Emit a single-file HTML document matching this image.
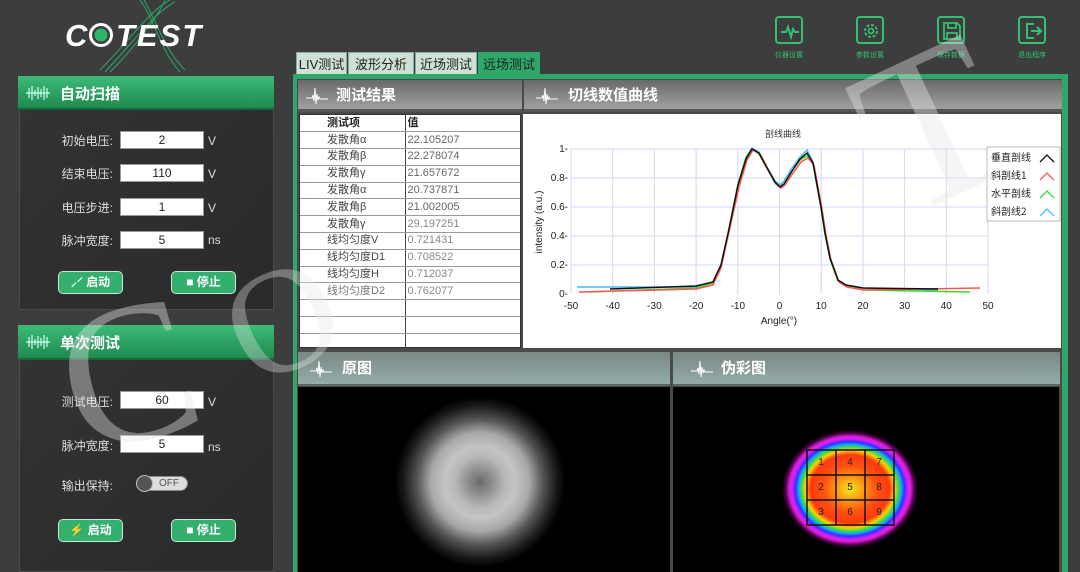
<!DOCTYPE html>
<html><head><meta charset="utf-8">
<style>
*{margin:0;padding:0;box-sizing:border-box}
body{width:1080px;height:572px;overflow:hidden;background:#3d3d3d;font-family:"Liberation Sans","Noto Sans CJK SC",sans-serif;position:relative;color:#fff}
.a{position:absolute}
.ghead{background:linear-gradient(#3dbb78,#1f8a50);border-bottom:2px solid #17653b}
.gbody{background:linear-gradient(135deg,#333,#2a2a2a);border:1px solid #4a4a4a}
.lbl{position:absolute;font-size:12px;color:#ddd;text-align:right;width:80px}
.inp{position:absolute;background:#fff;color:#222;border:1px solid #999;font-size:12px;text-align:center;line-height:16px;width:84px;height:18px}
.unit{position:absolute;font-size:12px;color:#ddd}
.btn{position:absolute;width:65px;height:23px;background:#33b06e;border:1.5px solid #c8e8d4;border-radius:5px;font-size:12px;font-weight:bold;color:#fff;text-align:center;line-height:20px}
.tab{position:absolute;top:52px;height:23px;background:#cfe0d4;color:#222;font-size:13px;line-height:23px;text-align:center;border:1px solid #8aa}
.phead{position:absolute;height:32px;background:linear-gradient(#6a6a6a,#a0a0a0);border-bottom:3px solid #555;font-size:15px;font-weight:bold;color:#fff;line-height:32px}
.phead2{position:absolute;height:34px;background:linear-gradient(#7a8885,#94aca8);border-bottom:2px solid #5a6664;font-size:15px;font-weight:bold;color:#fff;line-height:34px}
table{border-collapse:collapse;font-size:11px}
td{height:16.8px;border-bottom:1px solid #9a9a9a;padding:0;line-height:15px}
.ic{position:absolute;width:28px;height:28px;border:2px solid #34c072;border-radius:4px}
.icl{position:absolute;font-size:7px;color:#34c072;width:50px;text-align:center}
.wm{position:absolute;font-family:"Liberation Serif",serif;color:rgba(230,230,230,0.4);line-height:1}
</style></head><body>

<!-- logo -->
<svg class="a" style="left:60px;top:0" width="170" height="75">
<g fill="none" stroke="#2aa866" stroke-width="1">
<path d="M40 70 C70 40 90 10 110 0"/><path d="M45 72 C75 40 95 12 115 2"/><path d="M50 72 C80 42 100 12 105 0"/>
<path d="M80 0 C95 20 100 50 120 72"/><path d="M84 0 C98 25 105 50 125 70"/>
</g>
<text x="5" y="46" font-family="Liberation Sans" font-weight="bold" font-style="italic" font-size="31" fill="#fff">C</text>
<circle cx="41" cy="35" r="10.5" fill="none" stroke="#fff" stroke-width="3"/><circle cx="41" cy="35" r="6.5" fill="#2fb56a"/>
<text x="56" y="46" font-family="Liberation Sans" font-weight="bold" font-style="italic" font-size="31" fill="#fff" letter-spacing="2">TEST</text>
</svg>

<!-- top icons -->
<div class="ic" style="left:775px;top:16px"></div>
<svg class="a" style="left:779px;top:20px" width="22" height="22"><path d="M2 12 H7 L9 7 L12 17 L14 9 L16 12 H20" fill="none" stroke="#34c072" stroke-width="2"/></svg>
<div class="ic" style="left:856px;top:16px"></div>
<svg class="a" style="left:860px;top:20px" width="22" height="22"><circle cx="11" cy="11" r="6" fill="none" stroke="#34c072" stroke-width="2" stroke-dasharray="3 1.7"/><circle cx="11" cy="11" r="2.5" fill="none" stroke="#34c072" stroke-width="1.8"/></svg>
<div class="ic" style="left:937px;top:16px"></div>
<svg class="a" style="left:941px;top:20px" width="22" height="22"><path d="M3 3 H16 L19 6 V19 H3 Z M7 3 V8 H15 V3 M6 19 V13 H16 V19" fill="none" stroke="#34c072" stroke-width="1.8"/></svg>
<div class="ic" style="left:1018px;top:16px"></div>
<svg class="a" style="left:1022px;top:20px" width="22" height="22"><path d="M12 4 H5 V18 H12 M9 11 H19 M15 7 L19 11 L15 15" fill="none" stroke="#34c072" stroke-width="2"/></svg>
<div class="icl" style="left:764px;top:50px">仪器设置</div>
<div class="icl" style="left:845px;top:50px">参数设置</div>
<div class="icl" style="left:926px;top:50px">保存数据</div>
<div class="icl" style="left:1007px;top:50px">退出程序</div>

<!-- left panel 1 -->
<div class="a gbody" style="left:19px;top:108px;width:255px;height:202px"></div>
<div class="a ghead" style="left:18px;top:76px;width:256px;height:34px"></div>
<svg class="a" style="left:25px;top:85px" width="26" height="16"><path d="M1 8H25 M4 3V13 M7 1V15 M10 5V11 M13 2V14 M16 4V12 M19 1V15 M22 3V13" stroke="#cfe" stroke-width="1.2" fill="none"/></svg>
<div class="a" style="left:60px;top:83px;font-size:15px;font-weight:bold">自动扫描</div>
<div class="lbl" style="left:33px;top:132px">初始电压:</div><div class="inp" style="left:120px;top:131px">2</div><div class="unit" style="left:208px;top:134px">V</div>
<div class="lbl" style="left:33px;top:165px">结束电压:</div><div class="inp" style="left:120px;top:164px">110</div><div class="unit" style="left:208px;top:167px">V</div>
<div class="lbl" style="left:33px;top:199px">电压步进:</div><div class="inp" style="left:120px;top:198px">1</div><div class="unit" style="left:208px;top:201px">V</div>
<div class="lbl" style="left:33px;top:232px">脉冲宽度:</div><div class="inp" style="left:120px;top:231px">5</div><div class="unit" style="left:208px;top:233px">ns</div>
<div class="btn" style="left:58px;top:271px">⸝⸍ 启动</div>
<div class="btn" style="left:171px;top:271px">■ 停止</div>

<!-- left panel 2 -->
<div class="a gbody" style="left:19px;top:358px;width:255px;height:214px"></div>
<div class="a ghead" style="left:18px;top:325px;width:256px;height:35px"></div>
<svg class="a" style="left:25px;top:334px" width="26" height="16"><path d="M1 8H25 M4 3V13 M7 1V15 M10 5V11 M13 2V14 M16 4V12 M19 1V15 M22 3V13" stroke="#cfe" stroke-width="1.2" fill="none"/></svg>
<div class="a" style="left:60px;top:332px;font-size:15px;font-weight:bold">单次测试</div>
<div class="lbl" style="left:33px;top:393px">测试电压:</div><div class="inp" style="left:120px;top:391px">60</div><div class="unit" style="left:208px;top:395px">V</div>
<div class="lbl" style="left:33px;top:437px">脉冲宽度:</div><div class="inp" style="left:120px;top:435px">5</div><div class="unit" style="left:208px;top:440px">ns</div>
<div class="lbl" style="left:33px;top:477px">输出保持:</div>
<div class="a" style="left:136px;top:476px;width:52px;height:15px;border-radius:8px;background:#ddd;border:1px solid #888;font-size:10px;color:#555;line-height:13px;padding-left:22px">OFF</div>
<div class="a" style="left:136px;top:475px;width:17px;height:17px;border-radius:50%;background:#555;border:1.5px solid #bbb"></div>
<div class="btn" style="left:58px;top:519px">⚡ 启动</div>
<div class="btn" style="left:171px;top:519px">■ 停止</div>

<!-- tabs -->
<div class="tab" style="left:296px;width:51px">LIV测试</div>
<div class="tab" style="left:348px;width:66px">波形分析</div>
<div class="tab" style="left:415px;width:62px">近场测试</div>
<div class="tab" style="left:478px;width:62px;background:#2ea86a;border-color:#2ea86a">远场测试</div>

<!-- main frame -->
<div class="a" style="left:293px;top:74px;width:775px;height:498px;background:#2ea86a"></div>
<div class="a" style="left:297px;top:79px;width:765px;height:493px;background:#4a4a4a"></div>

<div class="phead" style="left:298px;top:80px;width:224px"><svg class="a" style="left:8px;top:6px" width="22" height="20"><path d="M0 12H6L7 9L8 15L9 2L10 18L11 8L12 14L13 11L14 13H22" stroke="#fff" fill="none" stroke-width="1"/></svg><span style="position:absolute;left:38px">测试结果</span></div>
<div class="phead" style="left:524px;top:80px;width:538px"><svg class="a" style="left:12px;top:6px" width="22" height="20"><path d="M0 12H6L7 9L8 15L9 2L10 18L11 8L12 14L13 11L14 13H22" stroke="#fff" fill="none" stroke-width="1"/></svg><span style="position:absolute;left:44px">切线数值曲线</span></div>

<!-- table -->
<div class="a" style="left:299px;top:114px;width:222px;height:234px;background:#fff;border:1px solid #333">
<table style="width:220px;color:#444">
<tr><td style="width:105px;padding-left:27px;font-weight:bold;color:#222">测试项</td><td style="border-left:1px solid #444;padding-left:2px;color:#222;font-weight:bold">值</td></tr>
<tr><td style="padding-left:27px">发散角α</td><td style="border-left:1px solid #444;padding-left:2px;color:#666">22.105207</td></tr>
<tr><td style="padding-left:27px">发散角β</td><td style="border-left:1px solid #444;padding-left:2px;color:#666">22.278074</td></tr>
<tr><td style="padding-left:27px">发散角γ</td><td style="border-left:1px solid #444;padding-left:2px;color:#666">21.657672</td></tr>
<tr><td style="padding-left:27px">发散角α</td><td style="border-left:1px solid #444;padding-left:2px;color:#666">20.737871</td></tr>
<tr><td style="padding-left:27px">发散角β</td><td style="border-left:1px solid #444;padding-left:2px;color:#666">21.002005</td></tr>
<tr><td style="padding-left:27px">发散角γ</td><td style="border-left:1px solid #444;padding-left:2px;color:#888">29.197251</td></tr>
<tr><td style="padding-left:27px">线均匀度V</td><td style="border-left:1px solid #444;padding-left:2px;color:#888">0.721431</td></tr>
<tr><td style="padding-left:27px">线均匀度D1</td><td style="border-left:1px solid #444;padding-left:2px;color:#888">0.708522</td></tr>
<tr><td style="padding-left:27px">线均匀度H</td><td style="border-left:1px solid #444;padding-left:2px;color:#888">0.712037</td></tr>
<tr><td style="padding-left:27px;color:#777">线均匀度D2</td><td style="border-left:1px solid #444;padding-left:2px;color:#888">0.762077</td></tr>
<tr><td></td><td style="border-left:1px solid #444"></td></tr>
<tr><td></td><td style="border-left:1px solid #444"></td></tr>
<tr><td style="border:0"></td><td style="border-left:1px solid #444;border-bottom:0"></td></tr>
</table></div>

<!-- chart -->
<svg class="a" style="left:523px;top:114px" width="538" height="234" viewBox="523 114 538 234">
<rect x="523" y="114" width="538" height="234" fill="#fff"/>
<g stroke="#d6d6f2" stroke-width="1">
<path d="M571 149V294M612.7 149V294M654.4 149V294M696.1 149V294M737.8 149V294M779.5 149V294M821.2 149V294M862.9 149V294M904.6 149V294M946.3 149V294M988 149V294"/>
<path d="M571 149H988M571 178H988M571 207H988M571 236H988M571 265H988"/>
</g>
<text x="783" y="137" font-size="9" fill="#333" text-anchor="middle" font-family="Noto Sans CJK SC">剖线曲线</text>
<g font-size="10" fill="#222" text-anchor="end" font-family="Liberation Sans">
<text x="568" y="152">1-</text><text x="568" y="181">0.8-</text><text x="568" y="210">0.6-</text><text x="568" y="239">0.4-</text><text x="568" y="268">0.2-</text><text x="568" y="297">0-</text></g>
<g font-size="10" fill="#222" text-anchor="middle" font-family="Liberation Sans">
<text x="571" y="309">-50</text><text x="612.7" y="309">-40</text><text x="654.4" y="309">-30</text><text x="696.1" y="309">-20</text><text x="737.8" y="309">-10</text><text x="779.5" y="309">0</text><text x="821.2" y="309">10</text><text x="862.9" y="309">20</text><text x="904.6" y="309">30</text><text x="946.3" y="309">40</text><text x="988" y="309">50</text>
<text x="779" y="324">Angle(°)</text></g>
<text transform="translate(542,222) rotate(-90)" font-size="10" fill="#222" text-anchor="middle" font-family="Liberation Sans">intensity (a.u.)</text>
<g fill="none" stroke-width="1.5">
<polyline stroke="#4cb8f0" points="577,287 696,287 713,282 721,265 729,229 738,185 746,158 752,148 759,152 767,167 775,181 780,185 784,181 792,168 800,157 807,150 813,162 817,185 821,207 825,233 830,258 838,280 846,285 863,288 938,290"/>
<polyline stroke="#33dd33" points="590,292 696,288 713,283 721,266 729,229 738,184 746,157 752,149 759,154 767,168 775,183 780,187 784,184 792,171 800,160 807,156 813,164 817,186 821,208 825,234 830,259 838,281 846,286 863,290 970,292"/>
<polyline stroke="#ff5555" points="579,292 696,289 713,285 721,268 729,232 739,187 747,160 753,150 760,154 768,169 776,184 781,188 785,185 793,173 801,162 808,158 814,165 818,187 822,209 826,235 831,260 839,282 847,287 864,290 980,288"/>
<polyline stroke="#111" points="610,289 696,286 713,282 721,265 729,229 738,185 746,159 752,149 759,153 767,168 775,182 780,187 784,184 792,171 800,159 807,153 813,163 817,185 821,207 825,233 830,258 838,280 846,285 863,288 938,289"/>
</g>
<rect x="987" y="147" width="73" height="74" fill="#fff" stroke="#bbb"/>
<g font-size="10" fill="#222" font-family="Noto Sans CJK SC"><text x="991" y="161">垂直剖线</text><text x="991" y="179">斜剖线1</text><text x="991" y="197">水平剖线</text><text x="991" y="215">斜剖线2</text></g>
<g fill="none" stroke-width="1.3"><path d="M1040 162l7-7 7 7" stroke="#111"/><path d="M1040 180l7-7 7 7" stroke="#f55"/><path d="M1040 198l7-7 7 7" stroke="#3d3"/><path d="M1040 216l7-7 7 7" stroke="#4bf"/></g>
</svg>

<!-- lower panels -->
<div class="phead2" style="left:298px;top:352px;width:372px"><svg class="a" style="left:12px;top:7px" width="22" height="20"><path d="M0 12H6L7 9L8 15L9 2L10 18L11 8L12 14L13 11L14 13H22" stroke="#fff" fill="none" stroke-width="1"/></svg><span style="position:absolute;left:44px">原图</span></div>
<div class="phead2" style="left:673px;top:352px;width:387px"><svg class="a" style="left:18px;top:7px" width="22" height="20"><path d="M0 12H6L7 9L8 15L9 2L10 18L11 8L12 14L13 11L14 13H22" stroke="#fff" fill="none" stroke-width="1"/></svg><span style="position:absolute;left:48px">伪彩图</span></div>
<div class="a" style="left:298px;top:387px;width:372px;height:185px;background:#000"></div>
<div class="a" style="left:673px;top:387px;width:386px;height:185px;background:#000"></div>
<div class="a" style="left:395px;top:397px;width:170px;height:170px;border-radius:50%;background:radial-gradient(circle closest-side,#6a6a6a 0%,#888 12%,#b8b8b8 30%,#c4c4c4 42%,#a8a8a8 58%,#555 74%,#1a1a1a 90%,#000 100%)"></div>
<div class="a" style="left:782px;top:430px;width:136px;height:118px;border-radius:50%;background:radial-gradient(ellipse closest-side,#e8ec20 0%,#ffa010 18%,#ff5010 40%,#ff3a10 58%,#ffd000 66%,#40e040 71%,#10a0ff 76%,#3030ff 80%,#d020ff 85%,#e020d0 89%,rgba(140,0,140,.5) 95%,#000 100%)"></div>
<svg class="a" style="left:806px;top:449px" width="90" height="78">
<g fill="none" stroke="#111" stroke-width="1.5"><rect x="1" y="1" width="87" height="75"/><path d="M30 1V76M59 1V76M1 26H88M1 51H88"/></g>
<g font-size="10" fill="#222" text-anchor="middle" font-family="Liberation Sans"><text x="15" y="16">1</text><text x="44" y="16">4</text><text x="73" y="16">7</text><text x="15" y="41">2</text><text x="44" y="41">5</text><text x="73" y="41">8</text><text x="15" y="66">3</text><text x="44" y="66">6</text><text x="73" y="66">9</text></g>
</svg>

<!-- watermark -->
<div class="wm" style="left:62px;top:275px;font-size:200px;transform:rotate(-15deg)">C</div>
<div class="wm" style="left:228px;top:245px;font-size:150px;transform:rotate(-25deg);color:rgba(230,230,230,0.35)">O</div>
<div class="wm" style="left:865px;top:15px;font-size:220px;transform:rotate(-25deg)">T</div>
</body></html>
